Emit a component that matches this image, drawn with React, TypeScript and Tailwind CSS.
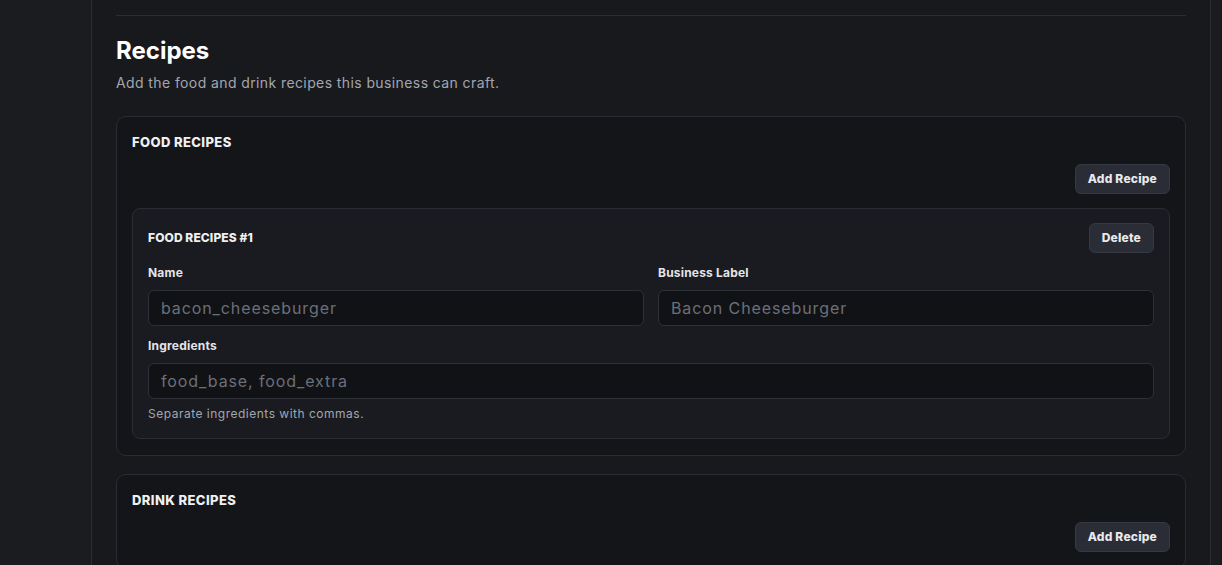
import React from 'react';

interface FieldProps {
    label: string;
    placeholder: string;
    hint?: string;
}

const Field = ({ label, placeholder, hint }: FieldProps) => (
    <label className="flex flex-col">
        <span className="text-[12px] leading-4 font-bold tracking-[0.2px] text-[#e4e5e9]">{label}</span>
        <input
            placeholder={placeholder}
            className="mt-[9px] h-9 w-full rounded-md border border-[#2e3038] bg-[#111216] px-3 text-[16px] tracking-[0.9px] text-[#d1d5db] outline-none placeholder:text-[#6b6f78]"
        />
        {hint && <span className="mt-[7px] text-[12px] leading-4 tracking-[0.5px] text-[#a3a6ae]">{hint}</span>}
    </label>
);

const SmallButton = ({ children }: { children: string }) => (
    <button className="h-[30px] rounded-md border border-[#363943] bg-[#2a2d35] px-3 text-[12px] font-extrabold tracking-[0.2px] text-[#e8e9ec]">
        {children}
    </button>
);

const RecipeItem = ({ group, index }: { group: string; index: number }) => (
    <div className="rounded-lg border border-[#2a2c33] bg-[#1a1b20] px-[15px] pt-[14px] pb-4">
        <div className="flex h-[30px] items-center justify-between">
            <span className="text-[12px] font-extrabold tracking-[0.1px] text-[#eef0f3] uppercase">
                {group} #{index}
            </span>
            <SmallButton>Delete</SmallButton>
        </div>
        <div className="mt-3 grid grid-cols-2 gap-x-[14px]">
            <Field label="Name" placeholder="bacon_cheeseburger" />
            <Field label="Business Label" placeholder="Bacon Cheeseburger" />
        </div>
        <div className="mt-3">
            <Field label="Ingredients" placeholder="food_base, food_extra" hint="Separate ingredients with commas." />
        </div>
    </div>
);

const RecipeGroup = ({ title, items }: { title: string; items: number }) => (
    <div className="rounded-[10px] border border-[#2a2c33] bg-[#141519] px-[15px] pt-[15px] pb-4">
        <h3 className="text-[13px] leading-5 font-extrabold tracking-[0.4px] text-[#eef0f3] uppercase">{title}</h3>
        <div className="mt-3 flex justify-end">
            <SmallButton>Add Recipe</SmallButton>
        </div>
        {items > 0 && (
            <div className="mt-[14px] flex flex-col gap-3">
                {Array.from({ length: items }).map((_, i) => (
                    <RecipeItem key={i} group={title} index={i + 1} />
                ))}
            </div>
        )}
    </div>
);

export default function App() {
    return (
        <div
            className="flex h-[565px] w-full overflow-hidden bg-[#1b1c20] text-white"
            style={{ fontFamily: 'Inter, "Noto Sans", sans-serif' }}
        >
            <aside className="w-[92px] shrink-0 border-r border-[#2b2d33]" />
            <main className="w-[1119px] shrink-0 border-r border-[#2b2d33] bg-[#18191d] px-6">
                <div className="mt-[15px] border-t border-[#2b2d33]" />
                <section className="pt-[19px]">
                    <h2 className="text-[24px] leading-8 font-bold text-white">Recipes</h2>
                    <p className="mt-1.5 text-[14px] leading-5 tracking-[0.4px] text-[#a3a6ae]">
                        Add the food and drink recipes this business can craft.
                    </p>
                    <div className="mt-[23px] flex flex-col gap-[18px]">
                        <RecipeGroup title="Food Recipes" items={1} />
                        <RecipeGroup title="Drink Recipes" items={0} />
                    </div>
                </section>
            </main>
        </div>
    );
}
